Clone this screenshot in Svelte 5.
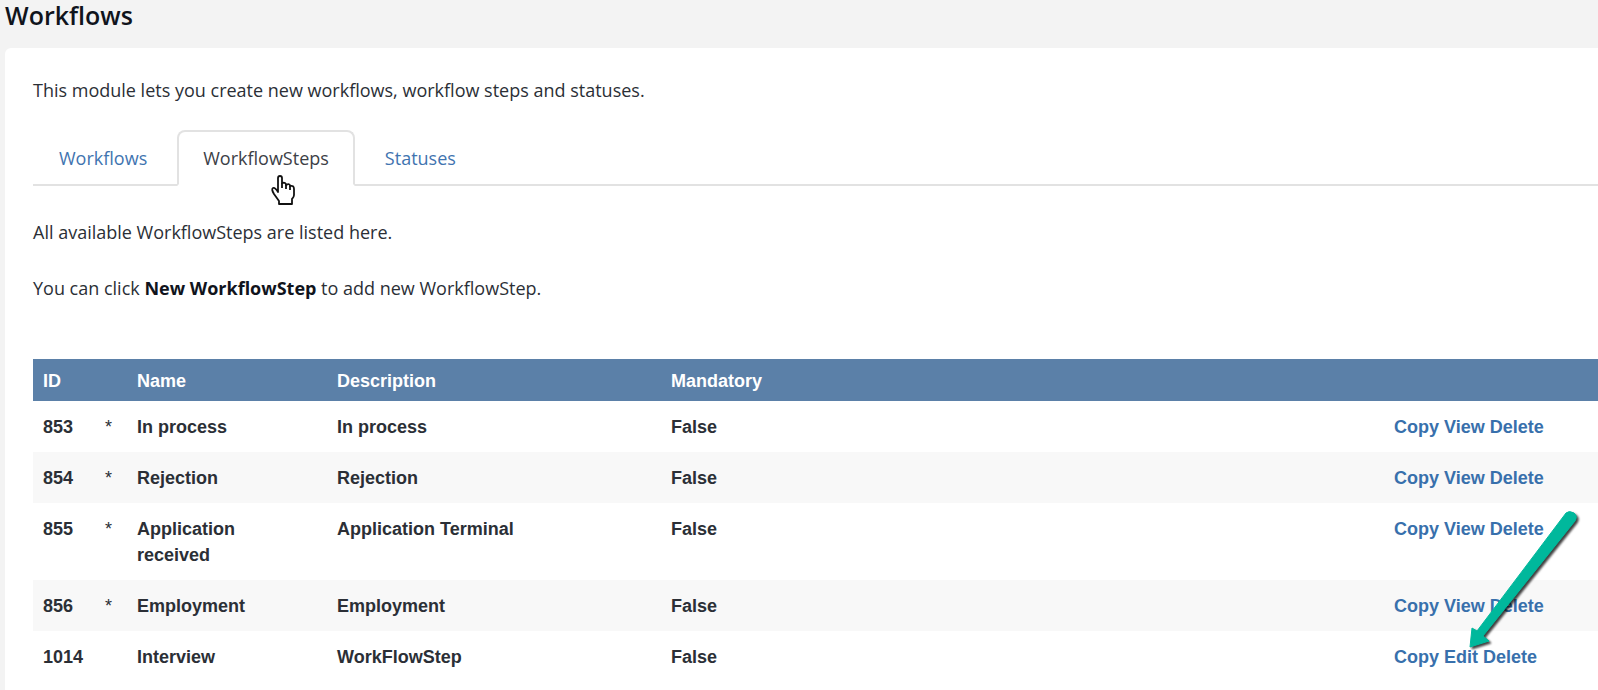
<script>
  const tabs = ['Workflows', 'WorkflowSteps', 'Statuses'];
  let active = $state('WorkflowSteps');

  const steps = [
    { id: 853, locked: true, name: 'In process', description: 'In process', mandatory: 'False' },
    { id: 854, locked: true, name: 'Rejection', description: 'Rejection', mandatory: 'False' },
    { id: 855, locked: true, name: 'Application received', description: 'Application Terminal', mandatory: 'False' },
    { id: 856, locked: true, name: 'Employment', description: 'Employment', mandatory: 'False' },
    { id: 1014, locked: false, name: 'Interview', description: 'WorkFlowStep', mandatory: 'False' },
  ];
</script>

<div class="page">
  <h1>Workflows</h1>

  <main class="card">
    <p class="intro">This module lets you create new workflows, workflow steps and statuses.</p>

    <div class="tabs" role="tablist">
      {#each tabs as tab}
        <button
          class="tab"
          class:active={tab === active}
          role="tab"
          aria-selected={tab === active}
          onclick={() => (active = tab)}
        >
          {tab}
          {#if tab === 'WorkflowSteps'}
            <svg class="pointer" width="24" height="32" viewBox="0 0 24 32" aria-hidden="true">
              <path
                d="M7 18 V4 Q7 2 9 2 Q11 2 11 4 V9 Q15 8 15 11 Q19 9 19 12 Q23 11 23 15 V21 Q23 23 21 25 V30 H8 V27 L3 20 Q0 15 2 14 Q4 13 7 18 Z"
                fill="#fff" stroke="#111" stroke-width="1.8" stroke-linejoin="round"
              />
              <path d="M11 9 V14 M15 11 V15 M19 12 V16" fill="none" stroke="#111" stroke-width="1.8" />
            </svg>
          {/if}
        </button>
      {/each}
    </div>

    <p>All available WorkflowSteps are listed here.</p>
    <p class="hint">You can click <strong>New WorkflowStep</strong> to add new WorkflowStep.</p>

    <table>
      <colgroup>
        <col class="c-id" />
        <col class="c-star" />
        <col class="c-name" />
        <col class="c-desc" />
        <col />
        <col class="c-actions" />
      </colgroup>
      <thead>
        <tr>
          <th>ID</th>
          <th></th>
          <th>Name</th>
          <th>Description</th>
          <th>Mandatory</th>
          <th></th>
        </tr>
      </thead>
      <tbody>
        {#each steps as step}
          <tr>
            <td>{step.id}</td>
            <td class="star">{step.locked ? '*' : ''}</td>
            <td class="name">{step.name}</td>
            <td>{step.description}</td>
            <td>{step.mandatory}</td>
            <td class="actions">
              <a href="#copy">Copy</a>
              {#if step.locked}
                <a href="#view">View</a>
              {:else}
                <a href="#edit">Edit</a>
              {/if}
              <a href="#delete">Delete</a>
              {#if !step.locked}
                <svg class="arrow" width="124" height="150" viewBox="0 0 124 150" aria-hidden="true">
                  <path
                    d="M10 141 L12 122 L17 125 L106 7 Q109 4 114 7 Q118 10 115 15 L23 130 L29 135 Z"
                    fill="#00b89c" stroke="#00b89c" stroke-width="1" stroke-linejoin="round"
                  />
                </svg>
              {/if}
            </td>
          </tr>
        {/each}
      </tbody>
    </table>
  </main>
</div>

<style>
  :global(body) {
    margin: 0;
    background: #f3f3f3;
  }

  .page {
    min-height: 100vh;
    display: flex;
    flex-direction: column;
    padding-left: 5px;
    box-sizing: border-box;
    font-family: 'Open Sans', 'Noto Sans', sans-serif;
    font-size: 18px;
    line-height: 28px;
    color: #2b2f36;
  }

  h1 {
    margin: 0;
    padding-bottom: 18px;
    font-size: 25px;
    line-height: 30px;
    font-weight: 600;
    color: #10141c;
  }

  .card {
    flex: 1;
    padding: 28px 0 0 28px;
    background: #fff;
    border-top-left-radius: 6px;
  }

  p {
    margin: 0 0 28px;
  }

  p.intro {
    margin-bottom: 26px;
  }

  p.hint {
    margin-bottom: 57px;
  }

  strong {
    color: #10141c;
  }

  .tabs {
    display: flex;
    gap: 4px;
    margin-bottom: 32px;
    border-bottom: 2px solid #e2e2e2;
  }

  .tab {
    position: relative;
    margin-bottom: -2px;
    padding: 12px 24px;
    border: 2px solid transparent;
    border-radius: 8px 8px 0 0;
    background: none;
    font: inherit;
    color: #3f74b0;
    cursor: pointer;
  }

  .tab.active {
    background: #fff;
    border-color: #e2e2e2;
    border-bottom-color: #fff;
    color: #3c4046;
  }

  .pointer {
    position: absolute;
    left: 92px;
    top: 42px;
    z-index: 1;
  }

  table {
    width: 100%;
    table-layout: fixed;
    border-collapse: collapse;
    font-family: 'Liberation Sans', Arial, sans-serif;
    font-weight: bold;
    line-height: 26px;
  }

  .c-id { width: 62px; }
  .c-star { width: 32px; }
  .c-name { width: 200px; }
  .c-desc { width: 334px; }
  .c-actions { width: 214px; }

  th {
    height: 26px;
    padding: 9px 10px 7px;
    background: #5b80a8;
    color: #fff;
    text-align: left;
  }

  td {
    padding: 13px 10px 12px;
    vertical-align: top;
    white-space: nowrap;
  }

  td.star {
    font-weight: normal;
  }

  td.name {
    padding-right: 40px;
    white-space: normal;
  }

  tbody tr:nth-child(even) {
    background: #f8f8f8;
  }

  .actions {
    position: relative;
  }

  .actions a {
    color: #3870ac;
    text-decoration: none;
  }

  .arrow {
    position: absolute;
    left: 76px;
    top: -125px;
    filter: drop-shadow(2px 2px 1px rgba(0, 0, 0, 0.75));
    pointer-events: none;
  }
</style>
